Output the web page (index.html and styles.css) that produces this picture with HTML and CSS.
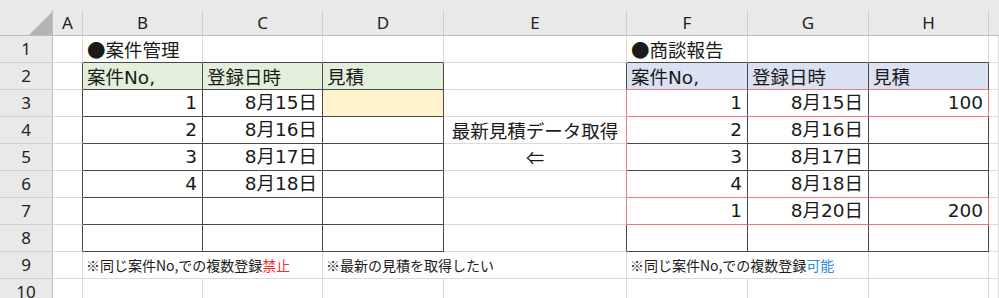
FILE: index.html
```html
<!DOCTYPE html>
<html lang="ja">
<head>
<meta charset="utf-8">
<link rel="stylesheet" href="styles.css">
</head>
<body>
<div class="strip"></div>
<div class="sheet">
  <div class="corner"><svg class="tri" width="23" height="23" viewBox="0 0 23 23"><polygon points="23,0 23,23 0,23" fill="#b4b4b4"/></svg></div>
  <div class="hc">A</div><div class="hc">B</div><div class="hc">C</div><div class="hc">D</div><div class="hc">E</div><div class="hc">F</div><div class="hc">G</div><div class="hc">H</div><div class="hc last"></div>

  <div class="rh">1</div>
  <div class="c"></div>
  <div class="c db">●案件管理</div>
  <div class="c db"></div>
  <div class="c db"></div>
  <div class="c"></div>
  <div class="c db">●商談報告</div>
  <div class="c db"></div>
  <div class="c db"></div>
  <div class="c"></div>

  <div class="rh">2</div>
  <div class="c dr"></div>
  <div class="c g dr db">案件<span class="lat">No,</span></div>
  <div class="c g dr db">登録日時</div>
  <div class="c g dr db">見積</div>
  <div class="c dr"></div>
  <div class="c b dr rb">案件<span class="lat">No,</span></div>
  <div class="c b dr rb">登録日時</div>
  <div class="c b dr rb">見積</div>
  <div class="c"></div>

  <div class="rh">3</div>
  <div class="c dr"></div>
  <div class="c dr db r">1</div>
  <div class="c dr db r">8月15日</div>
  <div class="c y dr db"></div>
  <div class="c rr"></div>
  <div class="c dr rb r">1</div>
  <div class="c dr rb r">8月15日</div>
  <div class="c rr rb r">100</div>
  <div class="c"></div>

  <div class="rh">4</div>
  <div class="c dr"></div>
  <div class="c dr db r">2</div>
  <div class="c dr db r">8月16日</div>
  <div class="c dr db"></div>
  <div class="c rr ctr">最新見積データ取得</div>
  <div class="c dr db r">2</div>
  <div class="c dr db r">8月16日</div>
  <div class="c dr db"></div>
  <div class="c"></div>

  <div class="rh">5</div>
  <div class="c dr"></div>
  <div class="c dr db r">3</div>
  <div class="c dr db r">8月17日</div>
  <div class="c dr db"></div>
  <div class="c rr ctr">⇐</div>
  <div class="c dr db r">3</div>
  <div class="c dr db r">8月17日</div>
  <div class="c dr db"></div>
  <div class="c"></div>

  <div class="rh">6</div>
  <div class="c dr"></div>
  <div class="c dr db r">4</div>
  <div class="c dr db r">8月18日</div>
  <div class="c dr db"></div>
  <div class="c rr"></div>
  <div class="c dr rb r">4</div>
  <div class="c dr rb r">8月18日</div>
  <div class="c dr rb"></div>
  <div class="c"></div>

  <div class="rh">7</div>
  <div class="c dr"></div>
  <div class="c dr db"></div>
  <div class="c dr db"></div>
  <div class="c dr db"></div>
  <div class="c rr"></div>
  <div class="c dr rb r">1</div>
  <div class="c dr rb r">8月20日</div>
  <div class="c rr rb r">200</div>
  <div class="c"></div>

  <div class="rh">8</div>
  <div class="c dr"></div>
  <div class="c dr db"></div>
  <div class="c dr db"></div>
  <div class="c dr db"></div>
  <div class="c dr"></div>
  <div class="c dr db"></div>
  <div class="c dr db"></div>
  <div class="c dr db"></div>
  <div class="c"></div>

  <div class="rh">9</div>
  <div class="c"></div>
  <div class="c note nr">※同じ案件No,での複数登録<span class="ng">禁止</span></div>
  <div class="c"></div>
  <div class="c note nr">※最新の見積を取得したい</div>
  <div class="c"></div>
  <div class="c note nr">※同じ案件No,での複数登録<span class="ok">可能</span></div>
  <div class="c"></div>
  <div class="c"></div>
  <div class="c"></div>

  <div class="rh">10</div>
  <div class="c"></div>
  <div class="c"></div>
  <div class="c"></div>
  <div class="c"></div>
  <div class="c"></div>
  <div class="c"></div>
  <div class="c"></div>
  <div class="c"></div>
  <div class="c"></div>
</div>
</body>
</html>
```

FILE: styles.css
```css
html, body {
  margin: 0;
  padding: 0;
  background: #ffffff;
  overflow: hidden;
  width: 999px;
  height: 298px;
}

.strip {
  height: 10px;
  background: #e9e9e9;
}

.sheet {
  display: grid;
  grid-template-columns: 53px 30px 120px 120px 121px 183px 121px 121px 120px 10px;
  grid-template-rows: 26px repeat(9, 27px) 30px;
  font-family: "Noto Sans CJK JP", "Noto Sans", sans-serif;
  color: #1a1a1a;
}

.corner {
  background: #e9e9e9;
  border-right: 1px solid #bdbdbd;
  border-bottom: 1px solid #bdbdbd;
  box-sizing: border-box;
  position: relative;
}

.tri {
  position: absolute;
  left: 29px;
  top: 2px;
}

.hc {
  background: #e9e9e9;
  border-right: 1px solid #cdcdcd;
  border-bottom: 1px solid #bdbdbd;
  box-sizing: border-box;
  text-align: center;
  font-family: "Noto Sans", "Open Sans", sans-serif;
  font-size: 17px;
  line-height: 25px;
  color: #222;
}

.hc.last {
  border-right: none;
}

.rh {
  background: #e9e9e9;
  border-right: 1px solid #bdbdbd;
  border-bottom: 1px solid #d0d0d0;
  box-sizing: border-box;
  text-align: center;
  font-family: "Noto Sans", "Open Sans", sans-serif;
  font-size: 17px;
  line-height: 26px;
  color: #222;
}

.c {
  box-sizing: border-box;
  border-right: 1px solid #dadada;
  border-bottom: 1px solid #dadada;
  font-size: 18.5px;
  line-height: 26px;
  padding: 0 3px 0 4px;
  white-space: nowrap;
  overflow: visible;
  position: relative;
}

.r {
  text-align: right;
  padding-right: 5px;
  font-family: "DejaVu Sans", "Noto Sans CJK JP", sans-serif;
}

.lat {
  font-family: "DejaVu Sans", "Noto Sans CJK JP", sans-serif;
}

.ctr { text-align: center; padding: 0; }

.dr { border-right-color: #4a4a4a; }
.db { border-bottom-color: #4a4a4a; }
.rr { border-right-color: #f27a7c; }
.rb { border-bottom-color: #f27a7c; }
.nr { border-right-color: transparent; }

.g { background: #e2efda; }
.b { background: #d9e1f2; }
.y { background: #fff2cc; }

.note {
  font-size: 14px;
  z-index: 1;
  padding-left: 3px;
}

.ng { color: #ff2a2a; }
.ok { color: #2f8ad8; }
```
